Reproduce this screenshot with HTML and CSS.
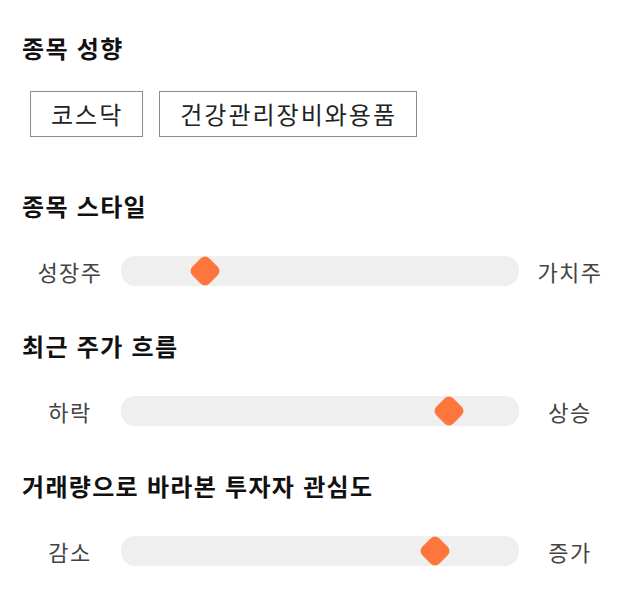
FILE: index.html
```html
<!DOCTYPE html>
<html lang="ko">
<head>
    <meta charset="UTF-8">
    <meta name="viewport" content="width=device-width, initial-scale=1.0">
    <title>종목 분석</title>
    <link rel="stylesheet" href="styles.css">
</head>
<body>
    <div class="container">
        <div class="section section-tags">
            <h2 class="title">종목 성향</h2>
            <div class="tag-list">
                <span class="tag">코스닥</span>
                <span class="tag">건강관리장비와용품</span>
            </div>
        </div>

        <div class="section">
            <h2 class="title">종목 스타일</h2>
            <div class="slider-row">
                <span class="slider-label">성장주</span>
                <div class="track">
                    <span class="thumb" style="left: 21%;"></span>
                </div>
                <span class="slider-label">가치주</span>
            </div>
        </div>

        <div class="section">
            <h2 class="title">최근 주가 흐름</h2>
            <div class="slider-row">
                <span class="slider-label">하락</span>
                <div class="track">
                    <span class="thumb" style="left: 82.5%;"></span>
                </div>
                <span class="slider-label">상승</span>
            </div>
        </div>

        <div class="section">
            <h2 class="title">거래량으로 바라본 투자자 관심도</h2>
            <div class="slider-row">
                <span class="slider-label">감소</span>
                <div class="track">
                    <span class="thumb" style="left: 79%;"></span>
                </div>
                <span class="slider-label">증가</span>
            </div>
        </div>
    </div>
</body>
</html>
```

FILE: styles.css
```css
* {
    margin: 0;
    padding: 0;
    box-sizing: border-box;
    font-family: "Noto Sans CJK KR", "Noto Sans", sans-serif;
}

body {
    background-color: white;
}

.container {
    padding: 33px 20px 0 20px;
}

.section {
    margin-bottom: 45px;
}

.section-tags {
    margin-bottom: 54px;
}

.title {
    font-size: 24px;
    line-height: 30px;
    font-weight: bold;
    letter-spacing: 1.3px;
    color: #111;
    padding-left: 2px;
}

.tag-list {
    display: flex;
    gap: 16px;
    margin-top: 28px;
    padding-left: 10px;
}

.tag {
    display: inline-block;
    height: 46px;
    line-height: 44px;
    padding: 0 19px 0 20px;
    border: 1px solid #8c8c8c;
    font-size: 24px;
    letter-spacing: 2px;
    color: #222;
}

.slider-row {
    display: grid;
    grid-template-columns: 100px 1fr 100px;
    align-items: center;
    margin-top: 35px;
}

.slider-label {
    text-align: center;
    font-size: 22px;
    line-height: 30px;
    letter-spacing: 1.5px;
    color: #444;
}

.track {
    position: relative;
    height: 30px;
    margin: 0 1px;
    background-color: #efefef;
    border-radius: 14px;
}

.thumb {
    position: absolute;
    top: 50%;
    width: 24px;
    height: 24px;
    background-color: #ff763c;
    border-radius: 6px;
    transform: translate(-50%, -50%) rotate(45deg);
}
```
